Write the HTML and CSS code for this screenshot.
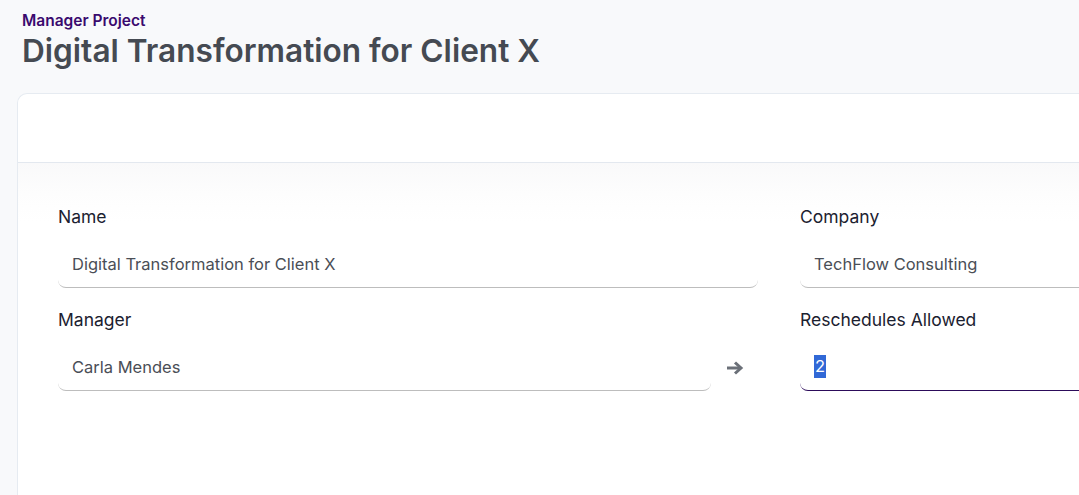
FILE: index.html
```html
<!DOCTYPE html>
<html lang="en">
<head>
<meta charset="utf-8">
<title>Manager Project</title>
<link rel="stylesheet" href="styles.css">
</head>
<body>
<div class="page">
  <header class="page-head">
    <div class="crumb">Manager Project</div>
    <h1 class="title">Digital Transformation for Client X</h1>
  </header>
  <section class="card">
    <div class="card-head"></div>
    <div class="card-body">
      <div class="grid">
        <div class="field">
          <label class="label">Name</label>
          <div class="input"><span class="value">Digital Transformation for Client X</span></div>
        </div>
        <div class="field">
          <label class="label">Company</label>
          <div class="input"><span class="value">TechFlow Consulting</span></div>
        </div>
        <div class="field">
          <label class="label">Manager</label>
          <div class="row">
            <div class="input grow"><span class="value">Carla Mendes</span></div>
            <span class="go">
              <svg width="18" height="14" viewBox="0 0 18 14"><path d="M1 7h12" stroke="#6b7078" stroke-width="3" fill="none"/><path d="M9 1.5l6 5.5-6 5.5" stroke="#6b7078" stroke-width="3" fill="none" stroke-linejoin="miter"/></svg>
            </span>
          </div>
        </div>
        <div class="field">
          <label class="label">Reschedules Allowed</label>
          <div class="input focus"><span class="value sel">2</span></div>
        </div>
      </div>
    </div>
  </section>
</div>
</body>
</html>
```
FILE: styles.css
```css
html, body {
  margin: 0;
  padding: 0;
  background: #f8f9fb;
  overflow: hidden;
  font-family: Inter, "Noto Sans", sans-serif;
}
.page {
  width: 1079px;
  height: 495px;
  overflow: hidden;
}
.page-head {
  padding: 11px 0 0 22px;
  height: 93px;
  box-sizing: border-box;
}
.crumb {
  font-size: 15.5px;
  font-weight: 600;
  color: #3a0a6e;
  line-height: 20px;
}
.title {
  margin: 0;
  font-size: 31.6px;
  font-weight: 600;
  color: #454a52;
  line-height: 40px;
}
.card {
  margin-left: 17px;
  width: 1500px;
  background: #fff;
  border: 1px solid #e6ebf1;
  border-right: none;
  border-radius: 10px 0 0 0;
  height: 420px;
}
.card-head {
  height: 68px;
  border-bottom: 1px solid #e3e8ef;
}
.card-body {
  padding: 43px 0 0 40px;
  background: linear-gradient(#f9f9fa, #fdfdfd 30px, #fff 60px);
  height: 350px;
}
.grid {
  display: grid;
  grid-template-columns: 700px 700px;
  column-gap: 42px;
  row-gap: 21px;
}
.field {
  display: flex;
  flex-direction: column;
}
.label {
  font-size: 17.5px;
  color: #1b2130;
  line-height: 22px;
  margin-bottom: 17px;
}
.row {
  display: flex;
  align-items: center;
}
.input {
  height: 43px;
  background: #fff;
  border-bottom: 1.5px solid #bdbdbd;
  border-radius: 8px;
  display: flex;
  align-items: center;
  padding: 0 0 5px 14px;
  box-sizing: border-box;
}
.input.grow {
  flex: 1;
}
.input.focus {
  border-bottom-color: #2c0b5a;
}
.value {
  font-size: 16.5px;
  color: #4a4e56;
}
.sel {
  background: #3168d6;
  color: #fff;
  padding: 0 1px;
  line-height: 23px;
}
.go {
  width: 47px;
  display: flex;
  justify-content: center;
  padding-bottom: 4px;
}
```
